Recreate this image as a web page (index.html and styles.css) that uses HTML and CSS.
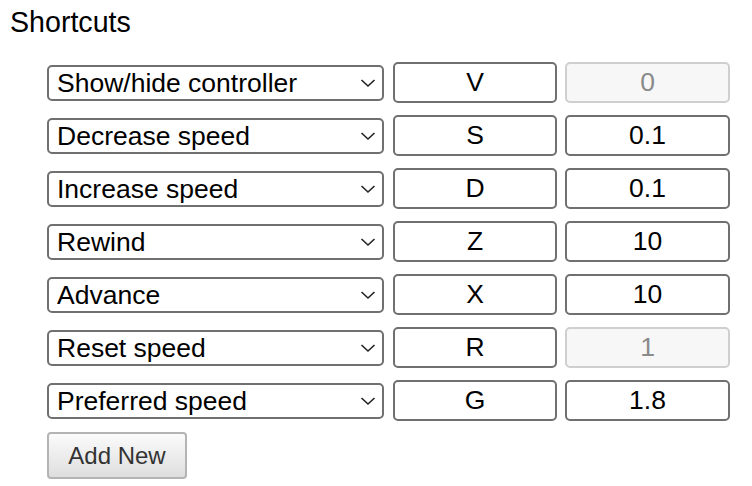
FILE: index.html
```html
<!DOCTYPE html>
<html>
<head>
<meta charset="utf-8">
<link rel="stylesheet" href="styles.css">
</head>
<body>
<h1 class="title">Shortcuts</h1>
<div class="list">
  <div class="row">
    <div class="sel"><select class="action"><option>Show/hide controller</option></select><svg class="chev" width="16" height="10" viewBox="0 0 16 10"><path d="M1.5 2 L8 8 L14.5 2" fill="none" stroke="#222" stroke-width="1.6"/></svg></div>
    <input class="key" value="V">
    <input class="val" value="0" disabled>
  </div>
  <div class="row">
    <div class="sel"><select class="action"><option>Decrease speed</option></select><svg class="chev" width="16" height="10" viewBox="0 0 16 10"><path d="M1.5 2 L8 8 L14.5 2" fill="none" stroke="#222" stroke-width="1.6"/></svg></div>
    <input class="key" value="S">
    <input class="val" value="0.1">
  </div>
  <div class="row">
    <div class="sel"><select class="action"><option>Increase speed</option></select><svg class="chev" width="16" height="10" viewBox="0 0 16 10"><path d="M1.5 2 L8 8 L14.5 2" fill="none" stroke="#222" stroke-width="1.6"/></svg></div>
    <input class="key" value="D">
    <input class="val" value="0.1">
  </div>
  <div class="row">
    <div class="sel"><select class="action"><option>Rewind</option></select><svg class="chev" width="16" height="10" viewBox="0 0 16 10"><path d="M1.5 2 L8 8 L14.5 2" fill="none" stroke="#222" stroke-width="1.6"/></svg></div>
    <input class="key" value="Z">
    <input class="val" value="10">
  </div>
  <div class="row">
    <div class="sel"><select class="action"><option>Advance</option></select><svg class="chev" width="16" height="10" viewBox="0 0 16 10"><path d="M1.5 2 L8 8 L14.5 2" fill="none" stroke="#222" stroke-width="1.6"/></svg></div>
    <input class="key" value="X">
    <input class="val" value="10">
  </div>
  <div class="row">
    <div class="sel"><select class="action"><option>Reset speed</option></select><svg class="chev" width="16" height="10" viewBox="0 0 16 10"><path d="M1.5 2 L8 8 L14.5 2" fill="none" stroke="#222" stroke-width="1.6"/></svg></div>
    <input class="key" value="R">
    <input class="val" value="1" disabled>
  </div>
  <div class="row">
    <div class="sel"><select class="action"><option>Preferred speed</option></select><svg class="chev" width="16" height="10" viewBox="0 0 16 10"><path d="M1.5 2 L8 8 L14.5 2" fill="none" stroke="#222" stroke-width="1.6"/></svg></div>
    <input class="key" value="G">
    <input class="val" value="1.8">
  </div>
  <button class="add">Add New</button>
</div>
</body>
</html>
```
FILE: styles.css
```css
html, body {
  margin: 0;
  padding: 0;
  background: #fff;
  font-family: "Liberation Sans", Arial, sans-serif;
}
.title {
  margin: 0;
  padding: 6px 0 0 10px;
  font-size: 28.6px;
  line-height: 32px;
  font-weight: normal;
  color: #000;
}
.list {
  padding: 24px 0 0 47px;
  display: flex;
  flex-direction: column;
  align-items: flex-start;
  gap: 12px;
}
.row {
  display: flex;
  align-items: center;
  height: 41px;
}
.sel {
  position: relative;
  width: 337px;
  height: 36px;
}
.action {
  -webkit-appearance: none;
  appearance: none;
  width: 100%;
  height: 100%;
  box-sizing: border-box;
  border: 2px solid #707070;
  border-radius: 5px;
  background: #fff;
  padding: 0 30px 0 8px;
  font-family: "Liberation Sans", Arial, sans-serif;
  font-size: 26.5px;
  color: #000;
  margin: 0;
}
.chev {
  position: absolute;
  right: 8px;
  top: 13px;
  pointer-events: none;
}
.key, .val {
  box-sizing: border-box;
  height: 41px;
  border: 2px solid #707070;
  border-radius: 5px;
  background: #fff;
  font-family: "Liberation Sans", Arial, sans-serif;
  font-size: 26.5px;
  color: #000;
  text-align: center;
  padding: 0;
  margin: 0;
  outline: none;
}
.key {
  width: 164px;
  margin-left: 9px;
}
.val {
  width: 165px;
  margin-left: 8px;
}
.val:disabled {
  border-color: #cfcfcf;
  background: #f7f7f7;
  color: #8a8a8a;
  -webkit-text-fill-color: #8a8a8a;
  opacity: 1;
}
.add {
  margin-top: -1px;
  width: 140px;
  height: 47px;
  box-sizing: border-box;
  border: 2px solid #b4b4b4;
  border-radius: 4px;
  background: linear-gradient(#fbfbfb, #dedede);
  font-family: "Liberation Sans", Arial, sans-serif;
  font-size: 24px;
  color: #333;
  padding: 0;
}
```
